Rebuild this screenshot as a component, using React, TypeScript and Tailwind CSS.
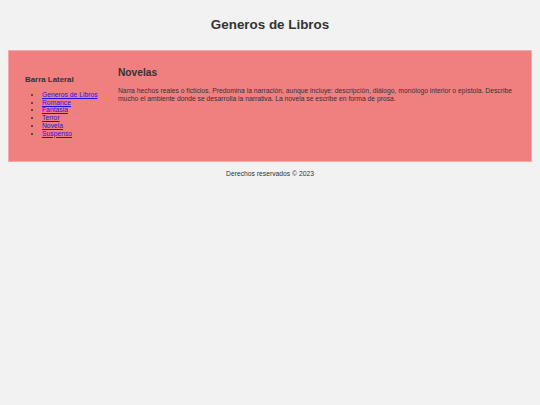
import React from 'react';

const GENEROS = ['Generos de Libros', 'Romance', 'Fantasia', 'Terror', 'Novela', 'Suspenso'];

export default function App() {
  return (
    <div className="min-h-[405px] bg-[#f2f2f2] text-[#333333] font-['Liberation_Sans',Arial,sans-serif]">
      {/* Header */}
      <header className="pt-[17px] pb-[18px] text-center">
        <h1 className="text-[13.4px] leading-[15px] font-bold">Generos de Libros</h1>
      </header>

      {/* Contenido */}
      <div className="mx-[8px] flex h-[112px] border border-[#f5a9a9] bg-[#f08080]">
        <aside className="w-[101px] shrink-0 pl-[16px] pr-[2px] pt-[24px]">
          <h3 className="text-[7.9px] leading-[9px] font-bold">Barra Lateral</h3>
          <ul className="mt-[7px] list-disc pl-[17px] text-[6.75px] leading-[7.7px]">
            {GENEROS.map((g) => (
              <li key={g} className="whitespace-nowrap">
                <a href="#" className="text-[#2a10e0] underline">{g}</a>
              </li>
            ))}
          </ul>
        </aside>

        <main className="flex-1 pl-[8px] pr-[16px] pt-[16px]">
          <h2 className="text-[10.2px] leading-[11.5px] font-bold">Novelas</h2>
          <p className="mt-[8.5px] text-[6.75px] leading-[7.9px]">
            Narra hechos reales o ficticios. Predomina la narración, aunque incluye: descripción, diálogo, monólogo interior o epístola. Describe mucho el ambiente donde se desarrolla la narrativa. La novela se escribe en forma de prosa.
          </p>
        </main>
      </div>

      {/* Footer */}
      <footer className="pt-[8px] text-center text-[6.75px] leading-[7.7px]">
        Derechos reservados © 2023
      </footer>
    </div>
  );
}
